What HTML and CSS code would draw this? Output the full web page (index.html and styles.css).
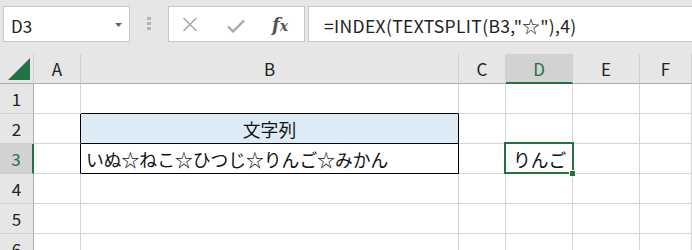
FILE: index.html
```html
<!DOCTYPE html>
<html>
<head>
  <title>TEXTSPLIT</title>
  <link rel="stylesheet" href="styles.css">
</head>
<body>
  <div class="toolbar">
    <div class="namebox">
      <span>D3</span>
      <svg class="caret" width="7" height="4" viewBox="0 0 7 4"><path d="M0 0h7L3.5 4z" fill="#666"/></svg>
    </div>
    <div class="grip"><i></i><i></i><i></i></div>
    <div class="fxbox">
      <svg width="16" height="15" viewBox="0 0 16 15"><path d="M1.5 1l13 13M14.5 1l-13 13" stroke="#a9a9a9" stroke-width="1.6" fill="none"/></svg>
      <svg width="18" height="14" viewBox="0 0 18 14"><path d="M1 7.5l5 5L17 1.5" stroke="#a9a9a9" stroke-width="2.4" fill="none"/></svg>
      <span class="fx">f<small>x</small></span>
    </div>
    <div class="formula">=INDEX(TEXTSPLIT(B3,"☆"),4)</div>
  </div>

  <div class="sheet">
    <div class="hd corner"><svg width="24" height="24" viewBox="0 0 24 24"><path d="M23 1V23H1z" fill="#217346"/></svg></div>
    <div class="hd col">A</div>
    <div class="hd col">B</div>
    <div class="hd col">C</div>
    <div class="hd col active">D</div>
    <div class="hd col">E</div>
    <div class="hd col">F</div>

    <div class="hd row">1</div>
    <div class="cell"></div>
    <div class="cell edge-b"></div>
    <div class="cell"></div>
    <div class="cell"></div>
    <div class="cell"></div>
    <div class="cell"></div>

    <div class="hd row">2</div>
    <div class="cell edge-r"></div>
    <div class="cell edge-r edge-b title">文字列</div>
    <div class="cell"></div>
    <div class="cell"></div>
    <div class="cell"></div>
    <div class="cell"></div>

    <div class="hd row active">3</div>
    <div class="cell edge-r"></div>
    <div class="cell edge-r edge-b">いぬ☆ねこ☆ひつじ☆りんご☆みかん</div>
    <div class="cell"></div>
    <div class="cell selected">りんご</div>
    <div class="cell"></div>
    <div class="cell"></div>

    <div class="hd row">4</div>
    <div class="cell"></div>
    <div class="cell"></div>
    <div class="cell"></div>
    <div class="cell"></div>
    <div class="cell"></div>
    <div class="cell"></div>

    <div class="hd row">5</div>
    <div class="cell"></div>
    <div class="cell"></div>
    <div class="cell"></div>
    <div class="cell"></div>
    <div class="cell"></div>
    <div class="cell"></div>

    <div class="hd row">6</div>
    <div class="cell"></div>
    <div class="cell"></div>
    <div class="cell"></div>
    <div class="cell"></div>
    <div class="cell"></div>
    <div class="cell"></div>
  </div>
</body>
</html>
```

FILE: styles.css
```css
body {
  margin: 0;
  background: #e6e6e6;
  font-family: "Noto Sans CJK JP", "Noto Sans", sans-serif;
  overflow: hidden;
  height: 250px;
}
.toolbar {
  height: 54px;
  box-sizing: border-box;
  padding: 6px 0 0 3px;
  display: flex;
  align-items: flex-start;
}
.namebox, .fxbox, .formula {
  height: 36px;
  box-sizing: border-box;
  background: #fff;
  border: 1px solid #c6c6c6;
  display: flex;
  align-items: center;
}
.namebox {
  width: 127px;
  padding: 0 7px 0 7px;
  justify-content: space-between;
  font-size: 17px;
  color: #222;
}
.namebox span {
  padding-top: 2px;
}
.caret {
  margin-top: 2px;
}
.grip {
  width: 38px;
  display: flex;
  flex-direction: column;
  align-items: center;
  gap: 2px;
  padding-top: 11px;
}
.grip i {
  width: 4px;
  height: 3px;
  background: #b4b4b4;
}
.fxbox {
  width: 137px;
  padding: 0 0 0 13px;
}
.fxbox svg:first-child {
  margin: 1px 29px 0 0;
}
.fxbox svg + svg {
  margin: 3px 27px 0 0;
}
.fx {
  font-family: "DejaVu Serif", "Liberation Serif", serif;
  font-style: italic;
  font-weight: bold;
  color: #555;
  font-size: 18px;
}
.fx small {
  font-size: 14px;
}
.formula {
  flex: 1;
  margin-left: 3px;
  border-right: none;
  padding: 2px 0 0 15px;
  font-size: 17.5px;
  letter-spacing: 0.35px;
  color: #222;
}
.sheet {
  display: grid;
  grid-template-columns: 34px 47px 378px 47px 67px 67px 1fr;
  grid-template-rows: repeat(7, 30px);
  background: #fff;
}
.hd {
  background: #e6e6e6;
  color: #222;
  font-size: 17px;
  display: flex;
  align-items: center;
  justify-content: center;
  box-sizing: border-box;
}
.hd.col {
  border-right: 1px solid #cfcfcf;
  border-bottom: 1px solid #ababab;
}
.hd.row {
  border-right: 1px solid #ababab;
  border-bottom: 1px solid #cfcfcf;
}
.hd.corner {
  border-right: 1px solid #cfcfcf;
  border-bottom: 1px solid #ababab;
  justify-content: flex-start;
  align-items: flex-start;
  padding: 3px 0 0 7px;
}
.hd.col.active {
  background: #d2d2d2;
  color: #217346;
  border-bottom: 2px solid #217346;
}
.hd.row.active {
  background: #d2d2d2;
  color: #217346;
  border-right: 2px solid #217346;
}
.cell {
  box-sizing: border-box;
  border-right: 1px solid #d4d4d4;
  border-bottom: 1px solid #d4d4d4;
  font-size: 17.8px;
  color: #111;
  display: flex;
  align-items: center;
  padding: 1px 0 0 5px;
  white-space: nowrap;
}
.cell.edge-r {
  border-right-color: #000;
}
.cell.edge-b {
  border-bottom-color: #000;
}
.cell.title {
  background: #ddebf7;
  justify-content: center;
  padding-left: 0;
}
.cell.selected {
  position: relative;
  padding-left: 7px;
}
.cell.selected::before {
  content: "";
  position: absolute;
  left: -2px;
  top: -2px;
  right: -2px;
  bottom: -1px;
  border: 2px solid #217346;
}
.cell.selected::after {
  content: "";
  position: absolute;
  right: -4px;
  bottom: -4px;
  width: 5px;
  height: 5px;
  background: #217346;
  border: 1px solid #fff;
}
```
